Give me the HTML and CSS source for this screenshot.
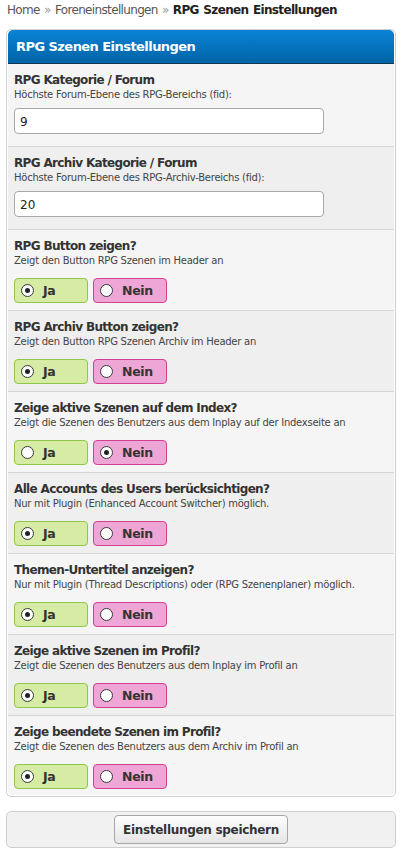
FILE: index.html
```html
<!DOCTYPE html>
<html lang="de">
<head>
<meta charset="utf-8">
<title>RPG Szenen Einstellungen</title>
<link rel="stylesheet" href="styles.css">
</head>
<body>
<div class="breadcrumb"><a class="crumb">Home</a> <span class="sep">»</span> <a class="crumb">Foreneinstellungen</a> <span class="sep">»</span> <span class="active">RPG Szenen Einstellungen</span></div>

<form class="settings">
  <div class="border-wrapper">
    <div class="panel-head">RPG Szenen Einstellungen</div>

    <div class="row">
      <div class="row-title">RPG Kategorie / Forum</div>
      <div class="row-desc">Höchste Forum-Ebene des RPG-Bereichs (fid):</div>
      <input class="text-input" type="text" value="9">
    </div>

    <div class="row alt">
      <div class="row-title">RPG Archiv Kategorie / Forum</div>
      <div class="row-desc">Höchste Forum-Ebene des RPG-Archiv-Bereichs (fid):</div>
      <input class="text-input" type="text" value="20">
    </div>

    <div class="row">
      <div class="row-title">RPG Button zeigen?</div>
      <div class="row-desc">Zeigt den Button RPG Szenen im Header an</div>
      <div class="options">
        <label class="opt yes"><input type="radio" name="r1" checked><span>Ja</span></label>
        <label class="opt no"><input type="radio" name="r1"><span>Nein</span></label>
      </div>
    </div>

    <div class="row alt">
      <div class="row-title">RPG Archiv Button zeigen?</div>
      <div class="row-desc">Zeigt den Button RPG Szenen Archiv im Header an</div>
      <div class="options">
        <label class="opt yes"><input type="radio" name="r2" checked><span>Ja</span></label>
        <label class="opt no"><input type="radio" name="r2"><span>Nein</span></label>
      </div>
    </div>

    <div class="row">
      <div class="row-title">Zeige aktive Szenen auf dem Index?</div>
      <div class="row-desc">Zeigt die Szenen des Benutzers aus dem Inplay auf der Indexseite an</div>
      <div class="options">
        <label class="opt yes"><input type="radio" name="r3"><span>Ja</span></label>
        <label class="opt no"><input type="radio" name="r3" checked><span>Nein</span></label>
      </div>
    </div>

    <div class="row alt">
      <div class="row-title">Alle Accounts des Users berücksichtigen?</div>
      <div class="row-desc">Nur mit Plugin (Enhanced Account Switcher) möglich.</div>
      <div class="options">
        <label class="opt yes"><input type="radio" name="r4" checked><span>Ja</span></label>
        <label class="opt no"><input type="radio" name="r4"><span>Nein</span></label>
      </div>
    </div>

    <div class="row">
      <div class="row-title">Themen-Untertitel anzeigen?</div>
      <div class="row-desc">Nur mit Plugin (Thread Descriptions) oder (RPG Szenenplaner) möglich.</div>
      <div class="options">
        <label class="opt yes"><input type="radio" name="r5" checked><span>Ja</span></label>
        <label class="opt no"><input type="radio" name="r5"><span>Nein</span></label>
      </div>
    </div>

    <div class="row alt">
      <div class="row-title">Zeige aktive Szenen im Profil?</div>
      <div class="row-desc">Zeigt die Szenen des Benutzers aus dem Inplay im Profil an</div>
      <div class="options">
        <label class="opt yes"><input type="radio" name="r6" checked><span>Ja</span></label>
        <label class="opt no"><input type="radio" name="r6"><span>Nein</span></label>
      </div>
    </div>

    <div class="row last">
      <div class="row-title">Zeige beendete Szenen im Profil?</div>
      <div class="row-desc">Zeigt die Szenen des Benutzers aus dem Archiv im Profil an</div>
      <div class="options">
        <label class="opt yes"><input type="radio" name="r7" checked><span>Ja</span></label>
        <label class="opt no"><input type="radio" name="r7"><span>Nein</span></label>
      </div>
    </div>
  </div>

  <div class="form-buttons">
    <button type="button" class="submit">Einstellungen speichern</button>
  </div>
</form>
</body>
</html>
```

FILE: styles.css
```css
* { box-sizing: border-box; }

body {
  margin: 0;
  padding: 0 9px 0 6px;
  background: #fff;
  font-family: "DejaVu Sans", Verdana, sans-serif;
  color: #333;
}

.breadcrumb {
  height: 29px;
  padding: 3px 0 0 1px;
  font-size: 12px;
  line-height: 15px;
  letter-spacing: -0.65px;
  word-spacing: 1px;
  color: #555;
}
.crumb { color: #555; }
.sep { color: #999; }
.active { color: #222; font-weight: bold; }

.border-wrapper {
  border: 1px solid #cfcfcf;
  border-radius: 5px;
  padding: 0 1px 1px;
  background: #fff;
}

.panel-head {
  height: 34px;
  padding: 8px 0 0 8px;
  border-radius: 5px 5px 0 0;
  background: linear-gradient(#0a82d6, #0064a6);
  border-bottom: 1px solid #113a57;
  color: #fff;
  font-size: 13px;
  font-weight: bold;
  line-height: 18px;
  letter-spacing: -0.55px;
}

.row {
  padding: 8px 6px 7px;
  background: #f5f5f5;
  border-bottom: 1px solid #d4d4d4;
}
.row.alt { background: #efefef; }
.row.last { border-bottom: 0; padding-bottom: 6px; border-radius: 0 0 4px 4px; }

.row-title {
  font-size: 12px;
  font-weight: bold;
  line-height: 16px;
  letter-spacing: -0.65px;
  color: #333;
}
.row-desc {
  font-size: 10px;
  line-height: 14px;
  letter-spacing: -0.25px;
  color: #444;
}

.text-input {
  display: block;
  width: 310px;
  height: 26px;
  margin: 6px 0 5px;
  padding: 2px 5px 0;
  border: 1px solid #a8a8a8;
  border-radius: 4px;
  background: #fff;
  font-family: "DejaVu Sans", Verdana, sans-serif;
  font-size: 12px;
  color: #222;
}

.options {
  display: flex;
  gap: 5px;
  margin-top: 10px;
}
.opt {
  display: flex;
  align-items: center;
  gap: 9px;
  width: 74px;
  height: 25px;
  padding-left: 6px;
  border: 1px solid;
  border-radius: 4px;
  font-size: 12.5px;
  font-weight: bold;
  letter-spacing: -0.3px;
  color: #333;
}
.opt.yes { background: #d6eba3; border-color: #8fc74a; }
.opt.no { background: #eda6d5; border-color: #d2418f; }

.opt input {
  appearance: none;
  -webkit-appearance: none;
  margin: 0;
  width: 13px;
  height: 13px;
  border: 1px solid #3a3a3a;
  border-radius: 50%;
  background: #fff;
  display: grid;
  place-content: center;
}
.opt input:checked::before {
  content: "";
  width: 5px;
  height: 5px;
  border-radius: 50%;
  background: #222;
}

.form-buttons {
  margin-top: 14px;
  height: 37px;
  border: 1px solid #cfcfcf;
  border-radius: 5px;
  background: #f1f1f1;
  display: flex;
  justify-content: center;
  align-items: center;
}
.submit {
  height: 29px;
  width: 174px;
  padding: 0;
  border: 1px solid #a6a6a6;
  border-radius: 4px;
  background: linear-gradient(#fdfdfd, #e6e6e6);
  font-family: "DejaVu Sans", Verdana, sans-serif;
  font-size: 12px;
  font-weight: bold;
  letter-spacing: -0.3px;
  color: #333;
}
```
